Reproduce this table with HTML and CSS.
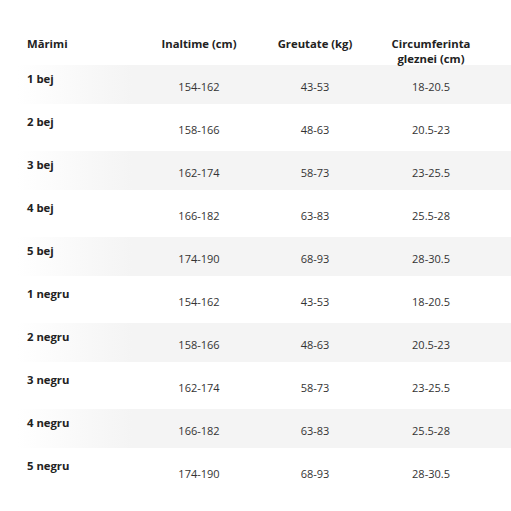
FILE: index.html
```html
<!DOCTYPE html>
<html lang="ro">
<head>
<meta charset="utf-8">
<link rel="stylesheet" href="styles.css">
</head>
<body>
<table class="sizes">
  <colgroup>
    <col class="c-name"><col class="c-val"><col class="c-val"><col class="c-last">
  </colgroup>
  <thead>
    <tr>
      <th class="name"><div class="hd">Mărimi</div></th>
      <th><div class="hd">Inaltime (cm)</div></th>
      <th><div class="hd">Greutate (kg)</div></th>
      <th class="last"><div class="hd">Circumferinta<br>gleznei (cm)</div></th>
    </tr>
  </thead>
  <tbody>
    <tr class="shade"><td class="name">1 bej</td><td>154-162</td><td>43-53</td><td class="last">18-20.5</td></tr>
    <tr><td class="name">2 bej</td><td>158-166</td><td>48-63</td><td class="last">20.5-23</td></tr>
    <tr class="shade"><td class="name">3 bej</td><td>162-174</td><td>58-73</td><td class="last">23-25.5</td></tr>
    <tr><td class="name">4 bej</td><td>166-182</td><td>63-83</td><td class="last">25.5-28</td></tr>
    <tr class="shade"><td class="name">5 bej</td><td>174-190</td><td>68-93</td><td class="last">28-30.5</td></tr>
    <tr><td class="name">1 negru</td><td>154-162</td><td>43-53</td><td class="last">18-20.5</td></tr>
    <tr class="shade"><td class="name">2 negru</td><td>158-166</td><td>48-63</td><td class="last">20.5-23</td></tr>
    <tr><td class="name">3 negru</td><td>162-174</td><td>58-73</td><td class="last">23-25.5</td></tr>
    <tr class="shade"><td class="name">4 negru</td><td>166-182</td><td>63-83</td><td class="last">25.5-28</td></tr>
    <tr><td class="name">5 negru</td><td>174-190</td><td>68-93</td><td class="last">28-30.5</td></tr>
  </tbody>
</table>
</body>
</html>
```

FILE: styles.css
```css
html, body {
  margin: 0;
  padding: 0;
  background: #fff;
}

body {
  font-family: "Open Sans", "Noto Sans", sans-serif;
  color: #333;
}

.sizes {
  margin: 36px 0 0 17px;
  width: 494px;
  table-layout: fixed;
  border-collapse: separate;
  border-spacing: 0;
}

.c-name { width: 124px; }
.c-val { width: 116px; }
.c-last { width: 138px; }

.sizes th {
  font-size: 11.3px;
  font-weight: 700;
  color: #222;
  line-height: 15px;
  text-align: center;
  vertical-align: top;
  padding: 0;
}

.hd {
  margin-bottom: -3px;
}

.sizes th.name {
  text-align: left;
  padding-left: 10px;
}

.sizes th.last,
.sizes td.last {
  padding-right: 22px;
}

.sizes td {
  height: 43px;
  box-sizing: border-box;
  border-top: 2px solid transparent;
  border-bottom: 2px solid transparent;
  background-clip: padding-box;
  font-size: 11px;
  line-height: 15px;
  text-align: center;
  vertical-align: top;
  padding: 14px 0 0 0;
  color: #333;
}

.sizes td.name {
  text-align: left;
  font-weight: 700;
  font-size: 11.3px;
  color: #222;
  padding: 6px 0 0 10px;
}

.shade td {
  background-color: #f4f4f4;
}

.shade td.name {
  background-image: linear-gradient(to right, #fff 0, #f4f4f4 115px);
}
```
